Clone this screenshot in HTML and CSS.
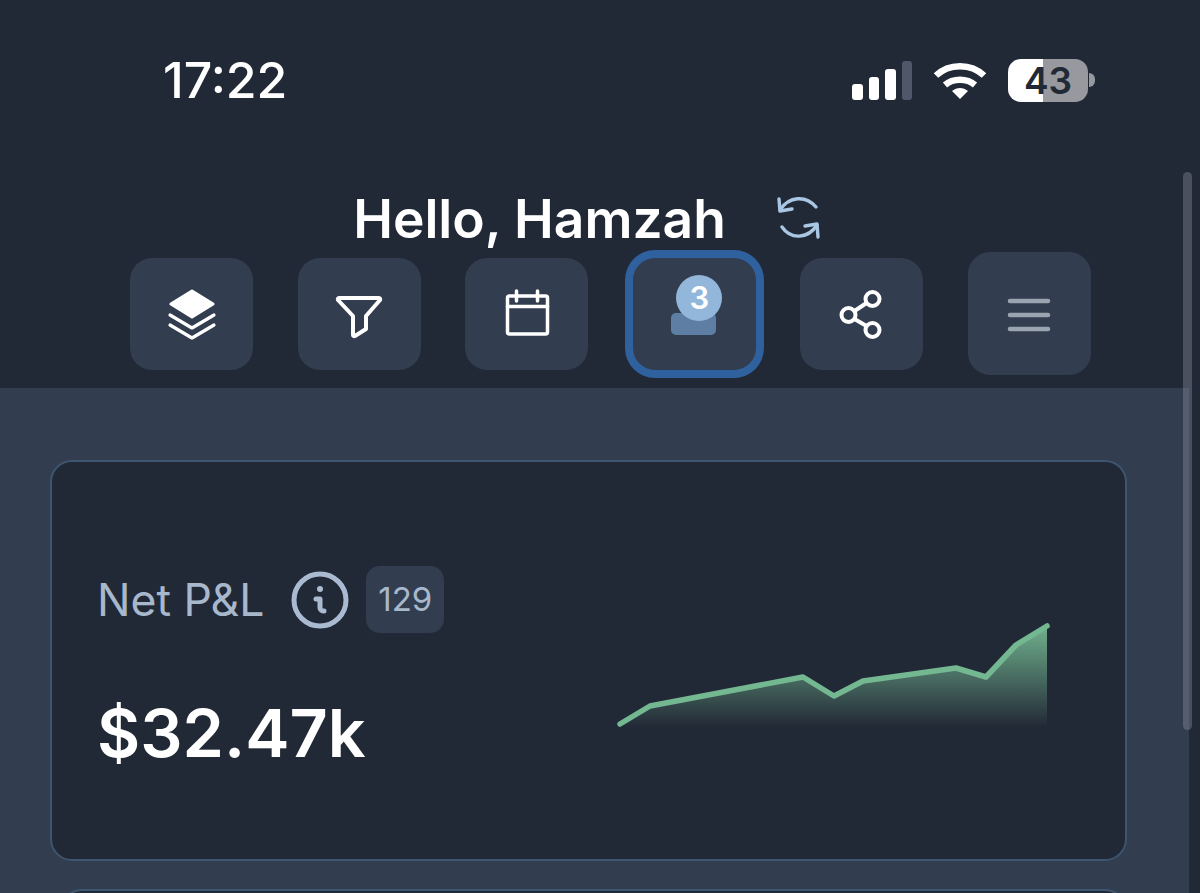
FILE: index.html
```html
<!DOCTYPE html>
<html lang="en">
<head>
    <meta charset="UTF-8">
    <meta name="viewport" content="width=device-width, initial-scale=1.0">
    <title>Dashboard</title>
    <link rel="stylesheet" href="styles.css">
</head>
<body>
    <div class="screen">
        <div class="scrollbar"></div>

        <header class="top">
            <div class="status-bar">
                <span class="time">17:22</span>
                <div class="status-icons">
                    <div class="signal">
                        <span class="bar bar-1"></span>
                        <span class="bar bar-2"></span>
                        <span class="bar bar-3"></span>
                        <span class="bar bar-4"></span>
                    </div>
                    <svg class="wifi" width="54" height="40" viewBox="0 0 54 40" fill="none" stroke="#fff" stroke-width="6.5">
                        <path d="M3 15.5C16 3 38 3 51 15.5"/>
                        <path d="M12 25C20 18 34 18 42 25"/>
                        <path d="M19 31C24 27 30 27 35 31L27 39Z" fill="#fff" stroke="none"/>
                    </svg>
                    <div class="battery">
                        <span class="battery-body">43</span>
                        <span class="battery-nub"></span>
                    </div>
                </div>
            </div>

            <div class="greeting">
                <h1>Hello, Hamzah</h1>
                <svg class="refresh" width="44" height="44" viewBox="0 0 44 44" fill="none" stroke="#a9c6e3" stroke-width="3.4" stroke-linecap="round" stroke-linejoin="round">
                    <path d="M40 11C30 -1 13 0 4 14"/>
                    <path d="M3 3L4 15L16 13"/>
                    <path d="M6 31C15 44 32 43 41 29"/>
                    <path d="M42 41L41 28L29 30"/>
                </svg>
            </div>

            <nav class="toolbar">
                <button class="tool">
                    <svg width="60" height="60" viewBox="-30 -30 60 60" fill="none" stroke="#fff" stroke-width="3.2" stroke-linecap="round" stroke-linejoin="round">
                        <path d="M-21 -10L0 -23L21 -10L0 3Z" fill="#fff"/>
                        <path d="M-22 1L0 14L22 1"/>
                        <path d="M-22 11L0 24L22 11"/>
                    </svg>
                </button>
                <button class="tool">
                    <svg width="60" height="60" viewBox="-30 -30 60 60" fill="none" stroke="#fff" stroke-width="4" stroke-linecap="round" stroke-linejoin="round">
                        <path d="M-20 -16H20C21 -16 21.500 -15 21 -14L7 2V15L-4 22C-5 22.500 -6 22 -6 21V2L-21 -14C-21.500 -15 -21 -16 -20 -16Z"/>
                    </svg>
                </button>
                <button class="tool">
                    <svg width="60" height="60" viewBox="-30 -30 60 60" fill="none" stroke="#fff" stroke-width="3.5" stroke-linecap="round" stroke-linejoin="round">
                        <rect x="-19.500" y="-18" width="40" height="38" rx="2"/>
                        <path d="M-19.500 -7.500H20.500"/>
                        <path d="M-10.500 -23V-13"/>
                        <path d="M10.500 -23V-13"/>
                    </svg>
                </button>
                <button class="tool tool-active">
                    <span class="count-stack">
                        <span class="count-card"></span>
                        <span class="count-badge">3</span>
                    </span>
                </button>
                <button class="tool">
                    <svg width="60" height="60" viewBox="-30 -30 60 60" fill="none" stroke="#fff" stroke-width="4">
                        <circle cx="10.500" cy="-15" r="7"/>
                        <circle cx="-13.500" cy="1" r="7"/>
                        <circle cx="10.500" cy="16" r="7"/>
                        <path d="M4.500 -11L-7.500 -3"/>
                        <path d="M-7.500 5L4.500 12"/>
                    </svg>
                </button>
                <button class="tool tool-menu">
                    <svg width="60" height="60" viewBox="-30 -30 60 60" fill="none" stroke="#9aa3b0" stroke-width="4.500" stroke-linecap="round">
                        <path d="M-19 -13H19"/>
                        <path d="M-19 1H19"/>
                        <path d="M-19 15H19"/>
                    </svg>
                </button>
            </nav>
        </header>

        <main class="panel">
            <section class="card">
                <div class="card-info">
                    <div class="card-label">
                        <span class="label-text">Net P&amp;L</span>
                        <svg class="info-icon" width="58" height="58" viewBox="0 0 58 58" fill="none" stroke="#a9bad1" stroke-linecap="round" stroke-linejoin="round">
                            <circle cx="29" cy="29" r="26" stroke-width="5"/>
                            <circle cx="29" cy="18" r="3" fill="#a9bad1" stroke="none"/>
                            <path d="M25 28H29V37C29 39 31 40 33 40" stroke-width="5"/>
                        </svg>
                        <span class="count-pill">129</span>
                    </div>
                    <div class="card-value">$32.47k</div>
                </div>
                <svg class="sparkline" width="440" height="120" viewBox="0 0 440 120" fill="none">
                    <defs>
                        <linearGradient id="spark-fill" x1="0" y1="0" x2="0" y2="1">
                            <stop offset="0" stop-color="#74b892" stop-opacity="0.95"/>
                            <stop offset="1" stop-color="#74b892" stop-opacity="0"/>
                        </linearGradient>
                    </defs>
                    <path d="M10 109L40 91L193 62L224 81L253 66L346 53L376 62L406 30L437 11V112H10Z" fill="url(#spark-fill)"/>
                    <path d="M10 109L40 91L193 62L224 81L253 66L346 53L376 62L406 30L437 11" stroke="#74b892" stroke-width="5.5" stroke-linecap="round" stroke-linejoin="round"/>
                </svg>
            </section>
            <section class="card card-next"></section>
        </main>
    </div>
</body>
</html>
```

FILE: styles.css
```css
* {
    box-sizing: border-box;
}
body {
    margin: 0;
    background-color: #222936;
    font-family: Inter, "Liberation Sans", sans-serif;
    color: white;
}
.screen {
    position: relative;
    width: 1200px;
    height: 893px;
    overflow: hidden;
}
.scrollbar {
    position: absolute;
    top: 172px;
    left: 1183px;
    width: 9px;
    height: 558px;
    border-radius: 5px;
    background: rgba(160, 165, 180, 0.32);
}

.top {
    height: 388px;
}
.status-bar {
    display: flex;
    justify-content: space-between;
    align-items: center;
    height: 160px;
    padding: 0 105px 0 163px;
}
.time {
    font-size: 50px;
    font-weight: 500;
}
.status-icons {
    display: flex;
    align-items: center;
}
.signal {
    display: flex;
    align-items: flex-end;
    gap: 6px;
    height: 40px;
}
.bar {
    width: 10.5px;
    border-radius: 3px;
    background: white;
}
.bar-1 {
    height: 16px;
}
.bar-2 {
    height: 23px;
}
.bar-3 {
    height: 31px;
}
.bar-4 {
    height: 39px;
    background: #50576a;
}
.wifi {
    margin: 0 21px;
}
.battery {
    display: flex;
    align-items: center;
    gap: 1px;
}
.battery-body {
    display: flex;
    justify-content: center;
    align-items: center;
    width: 80px;
    height: 43px;
    border-radius: 13px;
    background: linear-gradient(90deg, white 44%, #98999f 44%);
    color: #222936;
    font-size: 37px;
    font-weight: 600;
    line-height: 1;
}
.battery-nub {
    width: 6px;
    height: 14px;
    border-radius: 0 7px 7px 0;
    background: #98999f;
}

.greeting {
    display: flex;
    justify-content: center;
    align-items: center;
    gap: 50px;
    height: 92px;
    padding: 24px 27px 0 0;
}
.greeting h1 {
    margin: 0;
    font-size: 53.3px;
    font-weight: 600;
}
.toolbar {
    display: flex;
    align-items: center;
    gap: 44.6px;
    height: 123px;
    padding-left: 130px;
}
.tool {
    display: flex;
    justify-content: center;
    align-items: center;
    flex: none;
    width: 123px;
    height: 112px;
    padding: 0;
    border: none;
    border-radius: 22px;
    background-color: #323d4f;
}
.tool-active {
    box-shadow: 0 0 0 8px #2f619f;
}
.tool-menu {
    height: 123px;
}
.count-stack {
    position: relative;
    width: 46px;
    height: 60px;
    margin-bottom: 18px;
}
.count-card {
    position: absolute;
    left: 0;
    bottom: 0;
    width: 45px;
    height: 22px;
    border-radius: 5px;
    background: #5f7ea3;
}
.count-badge {
    position: absolute;
    top: 0;
    left: 5px;
    width: 46px;
    height: 46px;
    border-radius: 50%;
    background: #93b7da;
    color: white;
    font-family: Inter, "Liberation Sans", sans-serif;
    font-size: 31px;
    font-weight: 600;
    line-height: 46px;
    text-align: center;
}

.panel {
    width: 1189px;
    height: 505px;
    padding: 72px 62px 0 50px;
    background-color: #323d4f;
}
.card {
    display: flex;
    justify-content: space-between;
    align-items: flex-start;
    height: 401px;
    padding: 104px 75px 0 45px;
    border: 2px solid #3e556f;
    border-radius: 22px;
    background-color: #222936;
}
.card-next {
    margin-top: 28px;
    margin-left: 10px;
}
.card-label {
    display: flex;
    align-items: center;
    height: 67px;
}
.label-text {
    color: #a8b8cc;
    font-size: 44.5px;
}
.info-icon {
    margin-left: 27px;
}
.count-pill {
    width: 78px;
    height: 67px;
    margin-left: 17px;
    border-radius: 14px;
    background-color: #323d4f;
    color: #a8b8cc;
    font-size: 33px;
    line-height: 67px;
    text-align: center;
}
.card-value {
    margin-top: 60px;
    font-size: 66.5px;
    font-weight: 600;
}
.sparkline {
    margin-top: 49px;
}
```
